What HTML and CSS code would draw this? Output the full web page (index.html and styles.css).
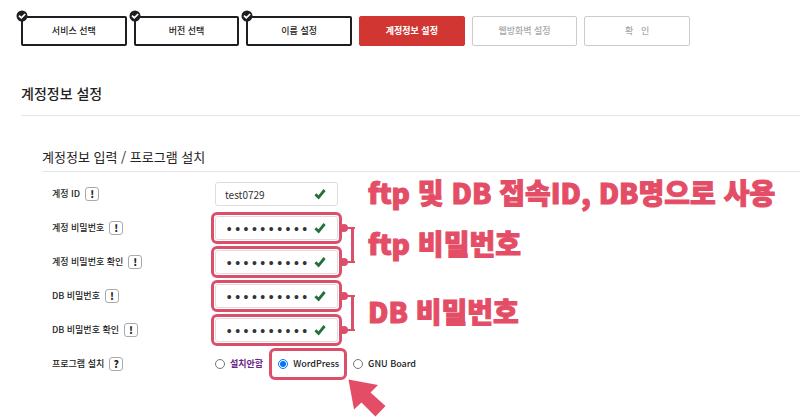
FILE: index.html
```html
<!DOCTYPE html>
<html lang="ko">
<head>
    <meta charset="UTF-8">
    <meta name="viewport" content="width=device-width, initial-scale=1.0">
    <title>계정정보 설정</title>
    <link rel="stylesheet" href="styles.css">
</head>
<body>
    <svg class="symbols" aria-hidden="true">
        <symbol id="icon-check" viewBox="0 0 12 12">
            <path d="M1.4 6.2 L4.6 9.4 L10.6 2" fill="none" stroke="#26703a" stroke-width="2.8"/>
        </symbol>
        <symbol id="icon-done" viewBox="0 0 12 12">
            <circle cx="6" cy="6" r="5.5" fill="#1d1d22"/>
            <path d="M3 5.6 L5.3 7.9 L9.2 4" fill="none" stroke="#fff" stroke-width="1.7"/>
        </symbol>
        <symbol id="icon-bracket" viewBox="0 0 14 42">
            <circle cx="2" cy="4" r="4" fill="#dc4f6a"/>
            <circle cx="2" cy="38" r="4" fill="#dc4f6a"/>
            <path d="M3 4 H13 M3 38 H13" fill="none" stroke="#dc4f6a" stroke-width="2"/>
            <path d="M10.5 3 V39" fill="none" stroke="#dc4f6a" stroke-width="3"/>
        </symbol>
    </svg>

    <header>
        <ol class="steps">
            <li class="step done"><svg class="step-icon"><use href="#icon-done"/></svg>서비스 선택</li>
            <li class="step done"><svg class="step-icon"><use href="#icon-done"/></svg>버전 선택</li>
            <li class="step done"><svg class="step-icon"><use href="#icon-done"/></svg>이름 설정</li>
            <li class="step active" aria-current="step">계정정보 설정</li>
            <li class="step">웹방화벽 설정</li>
            <li class="step">확 &nbsp; 인</li>
        </ol>
    </header>

    <main>
        <h1 class="page-title">계정정보 설정</h1>

        <form class="account-form">
            <h2 class="form-title">계정정보 입력 / 프로그램 설치</h2>

            <div class="group">
                <div class="rows">
                    <div class="row">
                        <div class="label-cell"><label for="account-id">계정 ID</label><button type="button" class="hint">!</button></div>
                        <div class="field">
                            <input type="text" id="account-id" value="test0729">
                            <svg class="check"><use href="#icon-check"/></svg>
                        </div>
                    </div>
                </div>
                <p class="note wide">ftp 및 DB 접속ID, DB명으로 사용</p>
            </div>

            <div class="group">
                <div class="rows">
                    <div class="row">
                        <div class="label-cell"><label for="account-pw">계정 비밀번호</label><button type="button" class="hint">!</button></div>
                        <div class="field marked">
                            <input type="password" id="account-pw" value="0123456789">
                            <svg class="check"><use href="#icon-check"/></svg>
                        </div>
                    </div>
                    <div class="row">
                        <div class="label-cell"><label for="account-pw2">계정 비밀번호 확인</label><button type="button" class="hint">!</button></div>
                        <div class="field marked">
                            <input type="password" id="account-pw2" value="0123456789">
                            <svg class="check"><use href="#icon-check"/></svg>
                        </div>
                    </div>
                </div>
                <svg class="bracket"><use href="#icon-bracket"/></svg>
                <p class="note">ftp 비밀번호</p>
            </div>

            <div class="group">
                <div class="rows">
                    <div class="row">
                        <div class="label-cell"><label for="db-pw">DB 비밀번호</label><button type="button" class="hint">!</button></div>
                        <div class="field marked">
                            <input type="password" id="db-pw" value="0123456789">
                            <svg class="check"><use href="#icon-check"/></svg>
                        </div>
                    </div>
                    <div class="row">
                        <div class="label-cell"><label for="db-pw2">DB 비밀번호 확인</label><button type="button" class="hint">!</button></div>
                        <div class="field marked">
                            <input type="password" id="db-pw2" value="0123456789">
                            <svg class="check"><use href="#icon-check"/></svg>
                        </div>
                    </div>
                </div>
                <svg class="bracket"><use href="#icon-bracket"/></svg>
                <p class="note">DB 비밀번호</p>
            </div>

            <div class="row">
                <div class="label-cell"><span>프로그램 설치</span><button type="button" class="hint">?</button></div>
                <div class="options">
                    <label class="option none"><input type="radio" name="program">설치안함</label>
                    <label class="option marked"><input type="radio" name="program" checked>WordPress
                        <svg class="arrow" viewBox="0 0 38 38" aria-hidden="true">
                            <path d="M0.5 0.5 L30 6 L22.5 13.5 L37.5 27 L27.5 37.5 L13.5 23.5 L6 30.5 Z" fill="#e44d66"/>
                        </svg>
                    </label>
                    <label class="option"><input type="radio" name="program">GNU Board</label>
                </div>
            </div>
        </form>
    </main>
</body>
</html>
```
FILE: styles.css
```css
* { box-sizing: border-box; }
body { min-height: 100vh; margin: 0; padding: 16px 0 0 21px; font-family: "Noto Sans CJK KR", sans-serif; font-size: 9px; line-height: 14px; font-weight: 500; color: #222; background-color: #fff; }
.symbols { display: none; }

/* 단계 표시 */
.steps { display: grid; grid-template-columns: repeat(6, 1fr); gap: 7px; max-width: 669px; margin: 0; padding: 0; list-style: none; }
.step { position: relative; height: 30px; display: flex; align-items: center; justify-content: center; border: 1px solid #ccc; border-radius: 2px; color: #aaa; }
.step.done { border: 2px solid #1d1d22; color: #222; }
.step.active { border-color: #d13632; background-color: #d13632; color: #fff; font-weight: 700; }
.step-icon { position: absolute; top: -8px; left: -7px; width: 12px; height: 12px; }

.page-title { margin: 36px 0 0; padding-bottom: 11px; border-bottom: 1px solid #e6e6e6; font-size: 14px; line-height: 22px; font-weight: 500; }

/* 계정 정보 입력 */
.account-form { padding: 31px 0 0 21px; }
.form-title { margin: 0 0 5px; padding-bottom: 4px; border-bottom: 1px solid #e6e6e6; font-size: 13px; line-height: 20px; font-weight: 400; }
.group { display: flex; align-items: center; }
.row { display: flex; align-items: center; height: 34px; }
.label-cell { display: flex; align-items: center; gap: 5px; width: 169px; padding-left: 10px; }
.hint { width: 14px; height: 14px; padding: 0; border: 1px solid #aaa; border-radius: 3px; background-color: #fff; font: 900 10px/12px "Noto Sans CJK KR", sans-serif; color: #222; }

.field { position: relative; width: 131px; padding: 1px; border: 3px solid transparent; border-radius: 6px; }
.field input { display: block; width: 100%; height: 24px; padding: 0 24px 0 9px; border: 1px solid #ddd; border-radius: 3px; background-color: #fff; font: 400 10px/14px "Noto Sans CJK KR", sans-serif; color: #333; }
.field input[type="password"] { padding-top: 3px; font: 400 14px/14px "Liberation Mono", monospace; }
.check { position: absolute; top: 7px; right: 13px; width: 12px; height: 12px; }
.marked { border: 3px solid #dc4f6a; border-radius: 6px; }

.bracket { width: 14px; height: 42px; }
.note { margin: 0 0 0 12px; padding-bottom: 4px; font-size: 28px; line-height: 30px; font-weight: 900; color: #e44d66; -webkit-text-stroke: 1px #e44d66; white-space: nowrap; }
.note.wide { margin-left: 26px; }

.options { display: flex; align-items: center; padding-left: 4px; }
.option { position: relative; display: flex; align-items: center; gap: 5px; height: 32px; padding-right: 9px; }
.option input { width: 10px; height: 10px; margin: 0; }
.option.none { color: #6b2484; font-weight: 700; padding-right: 6px; }
.option.marked { padding: 0 5px 0 6px; margin-right: 6px; }
.arrow { position: absolute; top: 28px; left: 76px; width: 38px; height: 38px; }
```
